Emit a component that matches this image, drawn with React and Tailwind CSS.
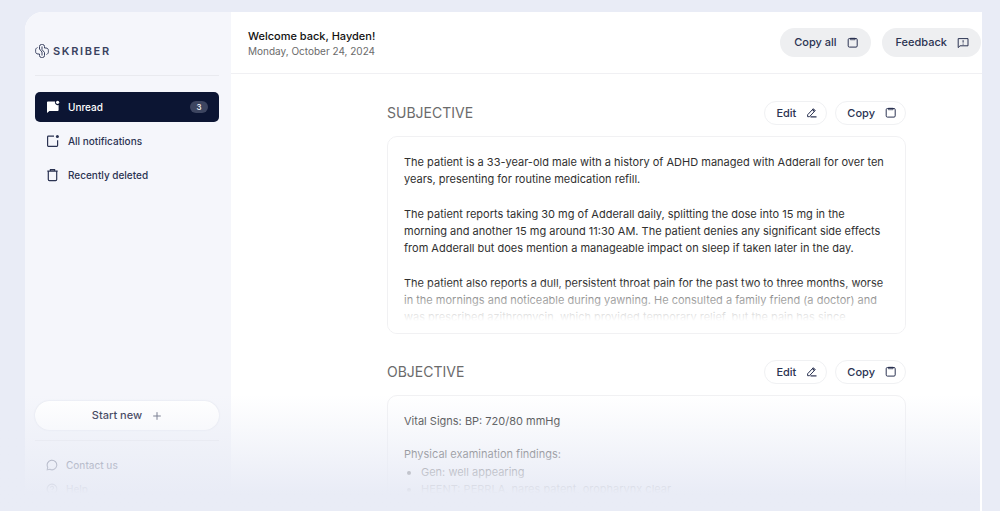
import React from 'react';

const UnreadIcon = () => (
    <svg viewBox="0 0 14 14" className="w-3.5 h-3.5" fill="currentColor">
        <path d="M1 2.4C1 1.8 1.5 1.4 2.1 1.4H9A2.9 2.9 0 0 0 12.6 5V10c0 .7-.5 1.1-1.1 1.1H3.4L1 13z" />
        <circle cx="11.6" cy="2.3" r="1.6" />
    </svg>
);

const NotificationsIcon = () => (
    <svg viewBox="0 0 14 14" className="w-3.5 h-3.5" fill="none" stroke="currentColor" strokeWidth="1.2">
        <path d="M8 2.2H2.4c-.4 0-.8.4-.8.8v8.6c0 .4.4.8.8.8h8.4c.4 0 .8-.4.8-.8V6.2" />
        <circle cx="11.4" cy="2.4" r="1.5" fill="currentColor" stroke="none" />
    </svg>
);

const TrashIcon = () => (
    <svg viewBox="0 0 14 14" className="w-3.5 h-3.5" fill="none" stroke="currentColor" strokeWidth="1.2">
        <path d="M1.3 3.2h10.4M4.4 3.2V1.6h4.2v1.6M2.3 3.2v8.4c0 .6.4 1 1 1h6.4c.6 0 1-.4 1-1V3.2" />
    </svg>
);

const ClipboardIcon = () => (
    <svg viewBox="0 0 12 12" className="w-3 h-3" fill="none" stroke="currentColor" strokeWidth="1">
        <rect x="1.2" y="1.5" width="9" height="8.6" rx="1.2" />
        <path d="M3.3 1.2h4.8v1.6H3.3z" fill="currentColor" fillOpacity="0.5" strokeWidth="0.6" />
    </svg>
);

const EditIcon = () => (
    <svg viewBox="0 0 12 12" className="w-3 h-3" fill="none" stroke="currentColor" strokeWidth="1" strokeLinejoin="round">
        <path d="M1.6 9.7V7.8L7.3 1.7l1.9 1.9-5.7 6.1z" />
        <path d="M6.6 2.6l1.7 1.7" strokeWidth="1.4" />
        <path d="M4.5 9.9h6" strokeWidth="1.2" />
    </svg>
);

const FeedbackIcon = () => (
    <svg viewBox="0 0 12 12" className="w-3 h-3" fill="none" stroke="currentColor" strokeWidth="1">
        <path d="M1.2 10.6V1.6h9.8v7.2H3zM6.1 3.2v2.4M6.1 6.6v1" />
    </svg>
);

const ChatIcon = () => (
    <svg viewBox="0 0 12 12" className="w-3 h-3" fill="none" stroke="currentColor" strokeWidth="1.1">
        <path d="M1.2 10.8l.5-2.6A4.8 4.8 0 1 1 3.8 10.3z" />
    </svg>
);

const HelpIcon = () => (
    <svg viewBox="0 0 12 12" className="w-3 h-3" fill="none" stroke="currentColor" strokeWidth="1.1">
        <circle cx="6" cy="6" r="4.9" />
        <path d="M4.5 4.8a1.5 1.5 0 1 1 2.2 1.3c-.5.3-.7.5-.7 1M6 8.2v1" />
    </svg>
);

const Logo = () => (
    <a href="#" className="flex items-center gap-1 text-[#3a4260]">
        <svg viewBox="0 0 14 16" className="w-3.5 h-4" fill="none" stroke="currentColor" strokeWidth="1">
            <path d="M9.5 5V3.500A2 2 0 0 0 7.500 1.500H6.500A2 2 0 0 0 4.500 3.500V6L7 9v3.500" />
            <path d="M4.500 11v1.500A2 2 0 0 0 6.500 14.500H7.500A2 2 0 0 0 9.500 12.500V9.500L7 6.500V3.500" />
            <path d="M2.500 4.500C1.300 5 .6 5.900 .6 7.200V8.500c0 1.500.9 2.500 2.400 2.500H4.500" />
            <path d="M9.500 5h1.500c1.500 0 2.400 1 2.400 2.500v1.300c0 1.300-.7 2.200-1.900 2.700" />
        </svg>
        <span className="text-[11px] leading-4 font-semibold tracking-[0.15em]">SKRIBER</span>
    </a>
);

const NavItem = ({ icon, label, count, active }) => (
    <a
        href="#"
        className={`flex items-center h-[30px] px-[11px] gap-2 rounded-[5px] text-[10px] font-medium ${active ? 'bg-[#0c1533] text-white' : 'text-[#2b3352]'}`}
    >
        {icon}
        <span>{label}</span>
        {count && (
            <span className="ml-auto w-[18px] h-3 rounded-full bg-[#3d4560] text-[8px] leading-3 text-center">{count}</span>
        )}
    </a>
);

const Sidebar = () => (
    <aside className="flex flex-col w-[206px] shrink-0 pl-2.5 pr-3 pt-[31px] pb-2.5 bg-[#f5f6fb]">
        <Logo />
        <hr className="mt-4 mb-4 border-[#e9eaef]" />
        <nav className="flex flex-col gap-1">
            <NavItem icon={<UnreadIcon />} label="Unread" count={3} active />
            <NavItem icon={<NotificationsIcon />} label="All notifications" />
            <NavItem icon={<TrashIcon />} label="Recently deleted" />
        </nav>

        <button className="mt-auto h-[29px] shrink-0 flex items-center justify-center gap-2.5 rounded-full bg-white shadow-[0_0_2px_#d9dce6] text-[11px] font-medium text-[#1c2442]">
            Start new
            <svg viewBox="0 0 10 10" className="w-2.5 h-2.5" fill="none" stroke="currentColor" strokeWidth="1" opacity="0.7">
                <path d="M5 1.2v7.6M1.2 5h7.6" />
            </svg>
        </button>
        <hr className="mt-2.5 mb-3 border-[#e9eaef]" />
        <div className="flex flex-col px-[11px] text-[10px] font-medium text-[#4a516b]">
            <a href="#" className="flex items-center gap-2 h-6"><ChatIcon />Contact us</a>
            <a href="#" className="flex items-center gap-2 h-6"><HelpIcon />Help</a>
        </div>
    </aside>
);

const HeaderButton = ({ label, icon }) => (
    <button className="flex items-center h-[29px] gap-2.5 pl-3.5 pr-3 rounded-full bg-[#eeeff1] text-[11px] font-medium text-[#2b3352]">
        {label}
        {icon}
    </button>
);

const SmallButton = ({ label, icon }) => (
    <button className="flex items-center h-6 gap-2.5 pl-[11px] pr-2 rounded-full border border-[#f0f1f3] bg-white text-[11px] font-medium text-[#2b3352]">
        {label}
        {icon}
    </button>
);

const Section = ({ title, children }) => (
    <section>
        <div className="flex items-center gap-2 mb-[11px]">
            <h2 className="mr-auto text-[14px] leading-5 text-[#6b6b6b]">{title}</h2>
            <SmallButton label="Edit" icon={<EditIcon />} />
            <SmallButton label="Copy" icon={<ClipboardIcon />} />
        </div>
        <div className="relative h-[198px] overflow-hidden rounded-[10px] border border-[#f1f1f3] px-4 py-[17px] text-[11px] leading-[17px] text-[#303030]">
            {children}
            <div className="absolute inset-x-0 bottom-0 h-12 bg-linear-to-b from-white/20 to-white to-75%" />
        </div>
    </section>
);

export default function App() {
    return (
        <div className="relative h-screen overflow-hidden flex pl-[25px] pr-[18px] pt-3 bg-[#e9ecf6] font-['Inter',sans-serif]">
            <div className="flex flex-1 min-w-0 overflow-hidden rounded-tl-[18px] bg-white">
                <Sidebar />

                <div className="flex-1 min-w-0">
                    <header className="flex items-center h-[62px] pl-[17px] pr-px border-b border-[#f0f0f3]">
                        <div className="mr-auto">
                            <h1 className="text-[11px] leading-4 font-medium text-[#111111]">Welcome back, Hayden!</h1>
                            <p className="text-[10px] leading-[14px] text-[#6b6b6b]">Monday, October 24, 2024</p>
                        </div>
                        <div className="flex gap-[11px]">
                            <HeaderButton label="Copy all" icon={<ClipboardIcon />} />
                            <HeaderButton label="Feedback" icon={<FeedbackIcon />} />
                        </div>
                    </header>

                    <main className="flex flex-col gap-[26px] pl-[156px] pr-[76px] pt-[27px]">
                        <Section title="SUBJECTIVE">
                            <div className="flex flex-col gap-[18px]">
                                <p>
                                    The patient is a 33-year-old male with a history of ADHD managed with Adderall for over ten
                                    years, presenting for routine medication refill.
                                </p>
                                <p>
                                    The patient reports taking 30 mg of Adderall daily, splitting the dose into 15 mg in the
                                    morning and another 15 mg around 11:30 AM. The patient denies any significant side effects
                                    from Adderall but does mention a manageable impact on sleep if taken later in the day.
                                </p>
                                <p>
                                    The patient also reports a dull, persistent throat pain for the past two to three months, worse
                                    in the mornings and noticeable during yawning. He consulted a family friend (a doctor) and
                                    was prescribed azithromycin, which provided temporary relief, but the pain has since
                                </p>
                            </div>
                        </Section>

                        <Section title="OBJECTIVE">
                            <p className="mb-4">Vital Signs: BP: 720/80 mmHg</p>
                            <p>Physical examination findings:</p>
                            <ul className="list-disc mt-px pl-[17px]">
                                <li>Gen: well appearing</li>
                                <li>HEENT: PERRLA, nares patent, oropharynx clear</li>
                            </ul>
                        </Section>
                    </main>
                </div>
            </div>

            {/* Bottom fade */}
            <div className="absolute left-0 right-5 bottom-0 h-[116px] pointer-events-none bg-linear-to-b from-[#e9ecf6]/0 to-[#e9ecf6] to-85%" />
        </div>
    );
}
